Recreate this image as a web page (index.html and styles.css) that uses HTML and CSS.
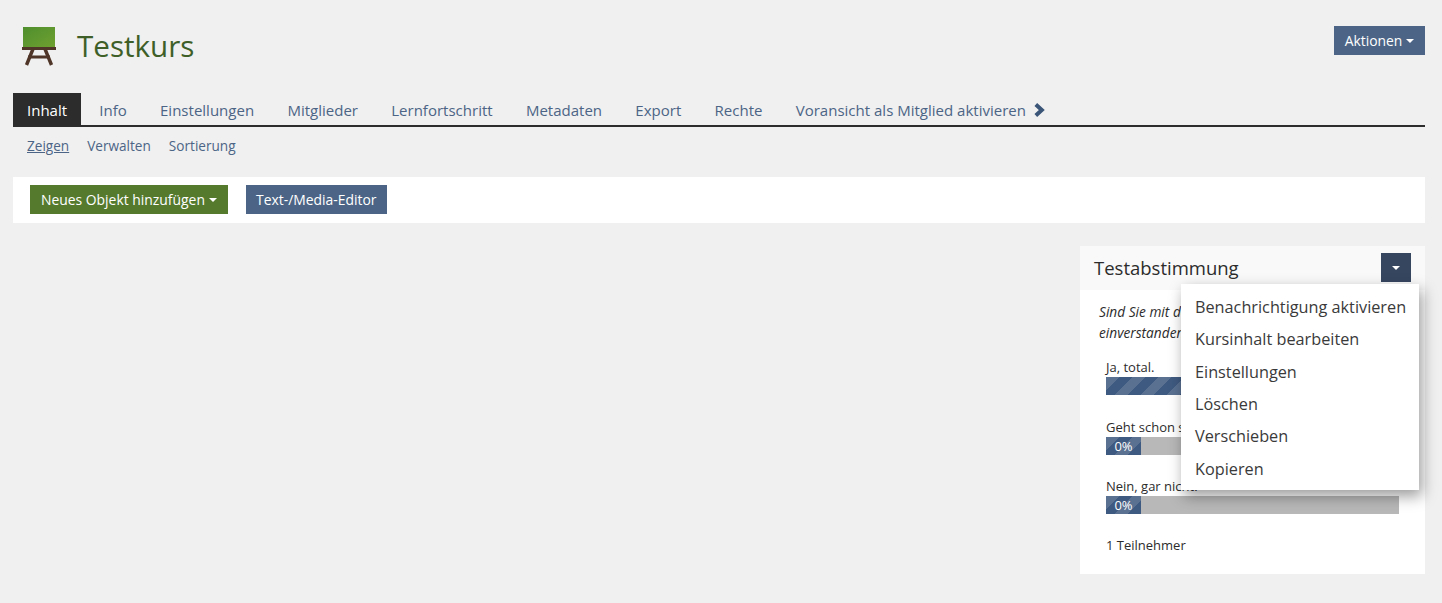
FILE: index.html
```html
<!DOCTYPE html>
<html lang="de">
<head>
<meta charset="utf-8">
<title>Testkurs</title>
<link rel="stylesheet" href="styles.css">
</head>
<body>
<header class="head">
  <div class="head-title">
    <svg class="course-icon" width="34" height="40" viewBox="0 0 34 40" aria-hidden="true">
      <defs><linearGradient id="board" x1="0" y1="0" x2="1" y2="1"><stop offset="0" stop-color="#4f8f2e"/><stop offset="1" stop-color="#6fa030"/></linearGradient></defs>
      <rect x="1" y="1" width="32" height="20" fill="url(#board)"/>
      <rect x="0" y="21" width="34" height="3" fill="#4f3527"/>
      <path d="M11 23 L4.500 39 M23 23 L29.500 39" stroke="#4f3527" stroke-width="3.400" fill="none"/>
      <rect x="6" y="29.500" width="22" height="3" fill="#4f3527"/>
    </svg>
    <h1 class="title">Testkurs</h1>
  </div>
  <a class="btn btn-blue" href="#">Aktionen <span class="caret"></span></a>
</header>
<nav class="tabs">
  <a class="tab active" href="#">Inhalt</a>
  <a class="tab" href="#">Info</a>
  <a class="tab" href="#">Einstellungen</a>
  <a class="tab" href="#">Mitglieder</a>
  <a class="tab" href="#">Lernfortschritt</a>
  <a class="tab" href="#">Metadaten</a>
  <a class="tab" href="#">Export</a>
  <a class="tab" href="#">Rechte</a>
  <a class="tab" href="#"><span>Voransicht als Mitglied aktivieren</span><svg class="chev" width="12" height="14" viewBox="0 0 12 14" aria-hidden="true"><path d="M2.800 1.500 L8.800 7 L2.800 12.500" fill="none" stroke="#3a5578" stroke-width="4"/></svg></a>
</nav>
<nav class="subtabs">
  <a class="sub current" href="#">Zeigen</a>
  <a class="sub" href="#">Verwalten</a>
  <a class="sub" href="#">Sortierung</a>
</nav>
<div class="toolbar">
  <a class="btn btn-green" href="#">Neues Objekt hinzufügen <span class="caret"></span></a>
  <a class="btn btn-blue btn-plain" href="#">Text-/Media-Editor</a>
</div>
<main class="content">
  <section class="panel">
    <div class="panel-head">
      <h2 class="panel-title">Testabstimmung</h2>
      <button class="panel-toggle" type="button"><span class="caret"></span></button>
      <ul class="menu">
        <li>Benachrichtigung aktivieren</li>
        <li>Kursinhalt bearbeiten</li>
        <li>Einstellungen</li>
        <li>Löschen</li>
        <li>Verschieben</li>
        <li>Kopieren</li>
      </ul>
    </div>
    <div class="panel-body">
      <p class="question">Sind Sie mit dem Kurs<br>einverstanden?</p>
      <div class="answers">
        <div class="answer">
          <div class="answer-label">Ja, total.</div>
          <div class="bar"><div class="fill" style="width:100%"></div></div>
        </div>
        <div class="answer">
          <div class="answer-label">Geht schon so.</div>
          <div class="bar"><div class="fill" style="width:35px">0%</div></div>
        </div>
        <div class="answer">
          <div class="answer-label">Nein, gar nicht.</div>
          <div class="bar"><div class="fill" style="width:35px">0%</div></div>
        </div>
      </div>
      <p class="count">1 Teilnehmer</p>
    </div>
  </section>
</main>
</body>
</html>
```
FILE: styles.css
```css
* { box-sizing: border-box; }
html, body { margin: 0; padding: 0; }
body {
  height: 603px;
  overflow: hidden;
  background: #f0f0f0;
  font-family: "Open Sans", sans-serif;
  color: #2c2c2c;
  font-size: 14px;
}
a { text-decoration: none; }
.head {
  display: flex;
  justify-content: space-between;
  align-items: flex-start;
  height: 93px;
  padding: 26px 17px 0 22px;
}
.head-title { display: flex; align-items: flex-start; gap: 21px; }
.course-icon { display: block; }
.title {
  margin: 0;
  font-size: 29.600px;
  font-weight: 400;
  line-height: 40px;
  color: #3f5f28;
}
.btn {
  display: inline-flex;
  align-items: center;
  justify-content: center;
  height: 29px;
  padding: 0 11px;
  font-size: 13.900px;
  color: #fff;
  white-space: pre;
}
.btn-plain { padding: 0 10.500px; }
.btn-blue { background: #4c6586; }
.btn-green { background: #557a2e; }
.caret {
  display: inline-block;
  width: 0;
  height: 0;
  border-top: 4px solid #fff;
  border-left: 4px solid transparent;
  border-right: 4px solid transparent;
}
.tabs {
  display: flex;
  height: 34px;
  margin: 0 17px 0 13px;
  border-bottom: 2px solid #2c2c2c;
}
.tab {
  display: flex;
  align-items: center;
  gap: 7px;
  height: 32px;
  padding: 2px 16.650px 0;
  font-size: 15.030px;
  color: #4c6586;
  white-space: nowrap;
}
.tab.active { background: #2c2c2c; color: #fff; padding: 2px 14px 0; margin-right: 1.500px; }
.chev { display: block; }
.subtabs {
  display: flex;
  gap: 18px;
  height: 50px;
  padding: 9px 0 0 27px;
}
.sub { font-size: 13.600px; line-height: 20px; color: #4c6586; }
.sub.current { text-decoration: underline; }
.toolbar {
  display: flex;
  gap: 18px;
  align-items: flex-start;
  height: 46px;
  margin: 0 17px 0 13px;
  padding: 8px 17px;
  background: #fff;
}
.content {
  display: flex;
  justify-content: flex-end;
  padding: 23px 17px 0 13px;
}
.panel { width: 345px; height: 328px; background: #fff; }
.panel-head {
  position: relative;
  display: flex;
  justify-content: space-between;
  align-items: flex-start;
  height: 44px;
  padding: 7px 14px;
  background: #f9f9f9;
}
.panel-title {
  margin: 0;
  font-size: 18.500px;
  font-weight: 400;
  line-height: 30px;
  color: #2c2c2c;
}
.panel-toggle {
  display: flex;
  align-items: center;
  justify-content: center;
  width: 30px;
  height: 29px;
  padding: 0;
  border: 0;
  background: #36465f;
}
.menu {
  position: absolute;
  top: 38px;
  left: 101px;
  width: 238px;
  height: 206px;
  margin: 0;
  padding: 6.800px 14px;
  list-style: none;
  background: #fff;
  box-shadow: 3px 6px 14px rgba(0, 0, 0, 0.4);
  z-index: 2;
}
.menu li {
  font-size: 16.250px;
  line-height: 32.400px;
  color: #3a3a3a;
  white-space: nowrap;
}
.panel-body { padding: 11px 26px 0 19px; }
.question {
  margin: 0 0 14px;
  font-size: 13.700px;
  font-style: italic;
  line-height: 21px;
  white-space: nowrap;
}
.answers { display: flex; flex-direction: column; gap: 21.500px; padding-left: 7px; }
.answer-label { font-size: 13px; line-height: 20px; height: 20px; white-space: nowrap; }
.bar { height: 18px; background: #b8b8b8; }
.fill {
  height: 100%;
  font-size: 13px;
  line-height: 18px;
  text-align: center;
  color: #fff;
  background-color: #3f5a80;
  background-image: repeating-linear-gradient(135deg, rgba(255,255,255,0.14) 0 9.200px, transparent 9.200px 18.400px);
}
.count { margin: 21px 0 0 7px; font-size: 13px; line-height: 20px; }
```
